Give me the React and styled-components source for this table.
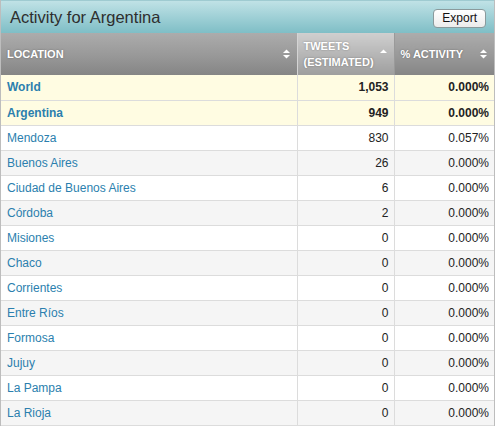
import React from 'react';
import styled, { createGlobalStyle } from 'styled-components';

const GlobalStyle = createGlobalStyle`
  html, body {
    margin: 0;
    padding: 0;
    background: #fff;
  }
  body {
    font-family: "Liberation Sans", Arial, sans-serif;
  }
`;

const Panel = styled.div`
  width: 495px;
  box-sizing: border-box;
  border-left: 1px solid #bdbdbd;
  border-right: 1px solid #bdbdbd;
  background: #fff;
`;

const TitleBar = styled.div`
  height: 33px;
  box-sizing: border-box;
  display: flex;
  align-items: center;
  justify-content: space-between;
  padding: 0 8px 0 9px;
  border-top: 1px solid #9fcbd1;
  background: linear-gradient(to bottom, #c0e2e6 0%, #9fd0d6 50%, #7fbec6 100%);
`;

const Title = styled.h2`
  margin: 0;
  font-size: 16.5px;
  font-weight: normal;
  color: #2e2e2e;
`;

const ExportButton = styled.button`
  height: 19px;
  padding: 0 8px;
  margin-top: 2px;
  font-family: "Liberation Sans", Arial, sans-serif;
  font-size: 12px;
  color: #111;
  background: linear-gradient(to bottom, #ffffff, #ececec);
  border: 1px solid #8a9a9c;
  border-radius: 4px;
`;

const Table = styled.table`
  width: 100%;
  border-collapse: collapse;
  table-layout: fixed;
`;

const HeadCell = styled.th`
  height: 42px;
  box-sizing: border-box;
  padding: 0 6px;
  text-align: left;
  vertical-align: middle;
  font-size: 11px;
  font-weight: bold;
  line-height: 16px;
  text-transform: uppercase;
  color: #fff;
  text-shadow: 0 0 2px rgba(0, 0, 0, 0.35);
  border-left: 1px solid ${p => (p.$sorted ? '#d4d4d4' : '#9a9a9a')};
  background: ${p =>
    p.$sorted
      ? 'linear-gradient(to bottom, #cfcfcf 0%, #b4b4b4 55%, #9e9e9e 100%)'
      : 'linear-gradient(to bottom, #acacac 0%, #989898 55%, #858585 100%)'};
  &:first-child {
    border-left: none;
  }
`;

const HeadInner = styled.div`
  display: flex;
  align-items: center;
  justify-content: space-between;
`;

const SortIcon = ({ up }) => (
  <svg width="9" height="10" viewBox="0 0 9 10" style={{ flexShrink: 0 }}>
    <path d="M4.5 0.5 L8 4 L1 4 Z" fill="#fff" />
    {!up && <path d="M4.5 9.5 L8 6 L1 6 Z" fill="#fff" />}
  </svg>
);

const Row = styled.tr`
  background: ${p => (p.$highlight ? '#fffce2' : p.$alt ? '#f5f5f5' : '#fff')};
  font-weight: ${p => (p.$highlight ? 'bold' : 'normal')};
`;

const Cell = styled.td`
  height: 25px;
  box-sizing: border-box;
  padding: 0 5px 0 6px;
  font-size: 12px;
  color: #222;
  text-align: ${p => (p.$num ? 'right' : 'left')};
  border-bottom: 1px solid #dcdcdc;
  border-left: 1px solid #dcdcdc;
  white-space: nowrap;
  &:first-child {
    border-left: none;
  }
`;

const PlaceLink = styled.a`
  color: #2b7fae;
  text-decoration: none;
`;

const rows = [
  { name: 'World', tweets: '1,053', activity: '0.000%', highlight: true },
  { name: 'Argentina', tweets: '949', activity: '0.000%', highlight: true },
  { name: 'Mendoza', tweets: '830', activity: '0.057%' },
  { name: 'Buenos Aires', tweets: '26', activity: '0.000%' },
  { name: 'Ciudad de Buenos Aires', tweets: '6', activity: '0.000%' },
  { name: 'Córdoba', tweets: '2', activity: '0.000%' },
  { name: 'Misiones', tweets: '0', activity: '0.000%' },
  { name: 'Chaco', tweets: '0', activity: '0.000%' },
  { name: 'Corrientes', tweets: '0', activity: '0.000%' },
  { name: 'Entre Ríos', tweets: '0', activity: '0.000%' },
  { name: 'Formosa', tweets: '0', activity: '0.000%' },
  { name: 'Jujuy', tweets: '0', activity: '0.000%' },
  { name: 'La Pampa', tweets: '0', activity: '0.000%' },
  { name: 'La Rioja', tweets: '0', activity: '0.000%' },
];

const App = () => {
  let plain = 0;
  return (
    <>
      <GlobalStyle />
      <Panel>
        <TitleBar>
          <Title>Activity for Argentina</Title>
          <ExportButton>Export</ExportButton>
        </TitleBar>
        <Table>
          <colgroup>
            <col style={{ width: 296 }} />
            <col style={{ width: 97 }} />
            <col />
          </colgroup>
          <thead>
            <tr>
              <HeadCell>
                <HeadInner>
                  <span>Location</span>
                  <SortIcon />
                </HeadInner>
              </HeadCell>
              <HeadCell $sorted>
                <HeadInner>
                  <span>Tweets<br />(Estimated)</span>
                  <SortIcon up />
                </HeadInner>
              </HeadCell>
              <HeadCell>
                <HeadInner>
                  <span>% Activity</span>
                  <SortIcon />
                </HeadInner>
              </HeadCell>
            </tr>
          </thead>
          <tbody>
            {rows.map(r => {
              const alt = !r.highlight && plain++ % 2 === 1;
              return (
                <Row key={r.name} $highlight={r.highlight} $alt={alt}>
                  <Cell>
                    <PlaceLink href="#">{r.name}</PlaceLink>
                  </Cell>
                  <Cell $num>{r.tweets}</Cell>
                  <Cell $num>{r.activity}</Cell>
                </Row>
              );
            })}
          </tbody>
        </Table>
      </Panel>
    </>
  );
};

export default App;
